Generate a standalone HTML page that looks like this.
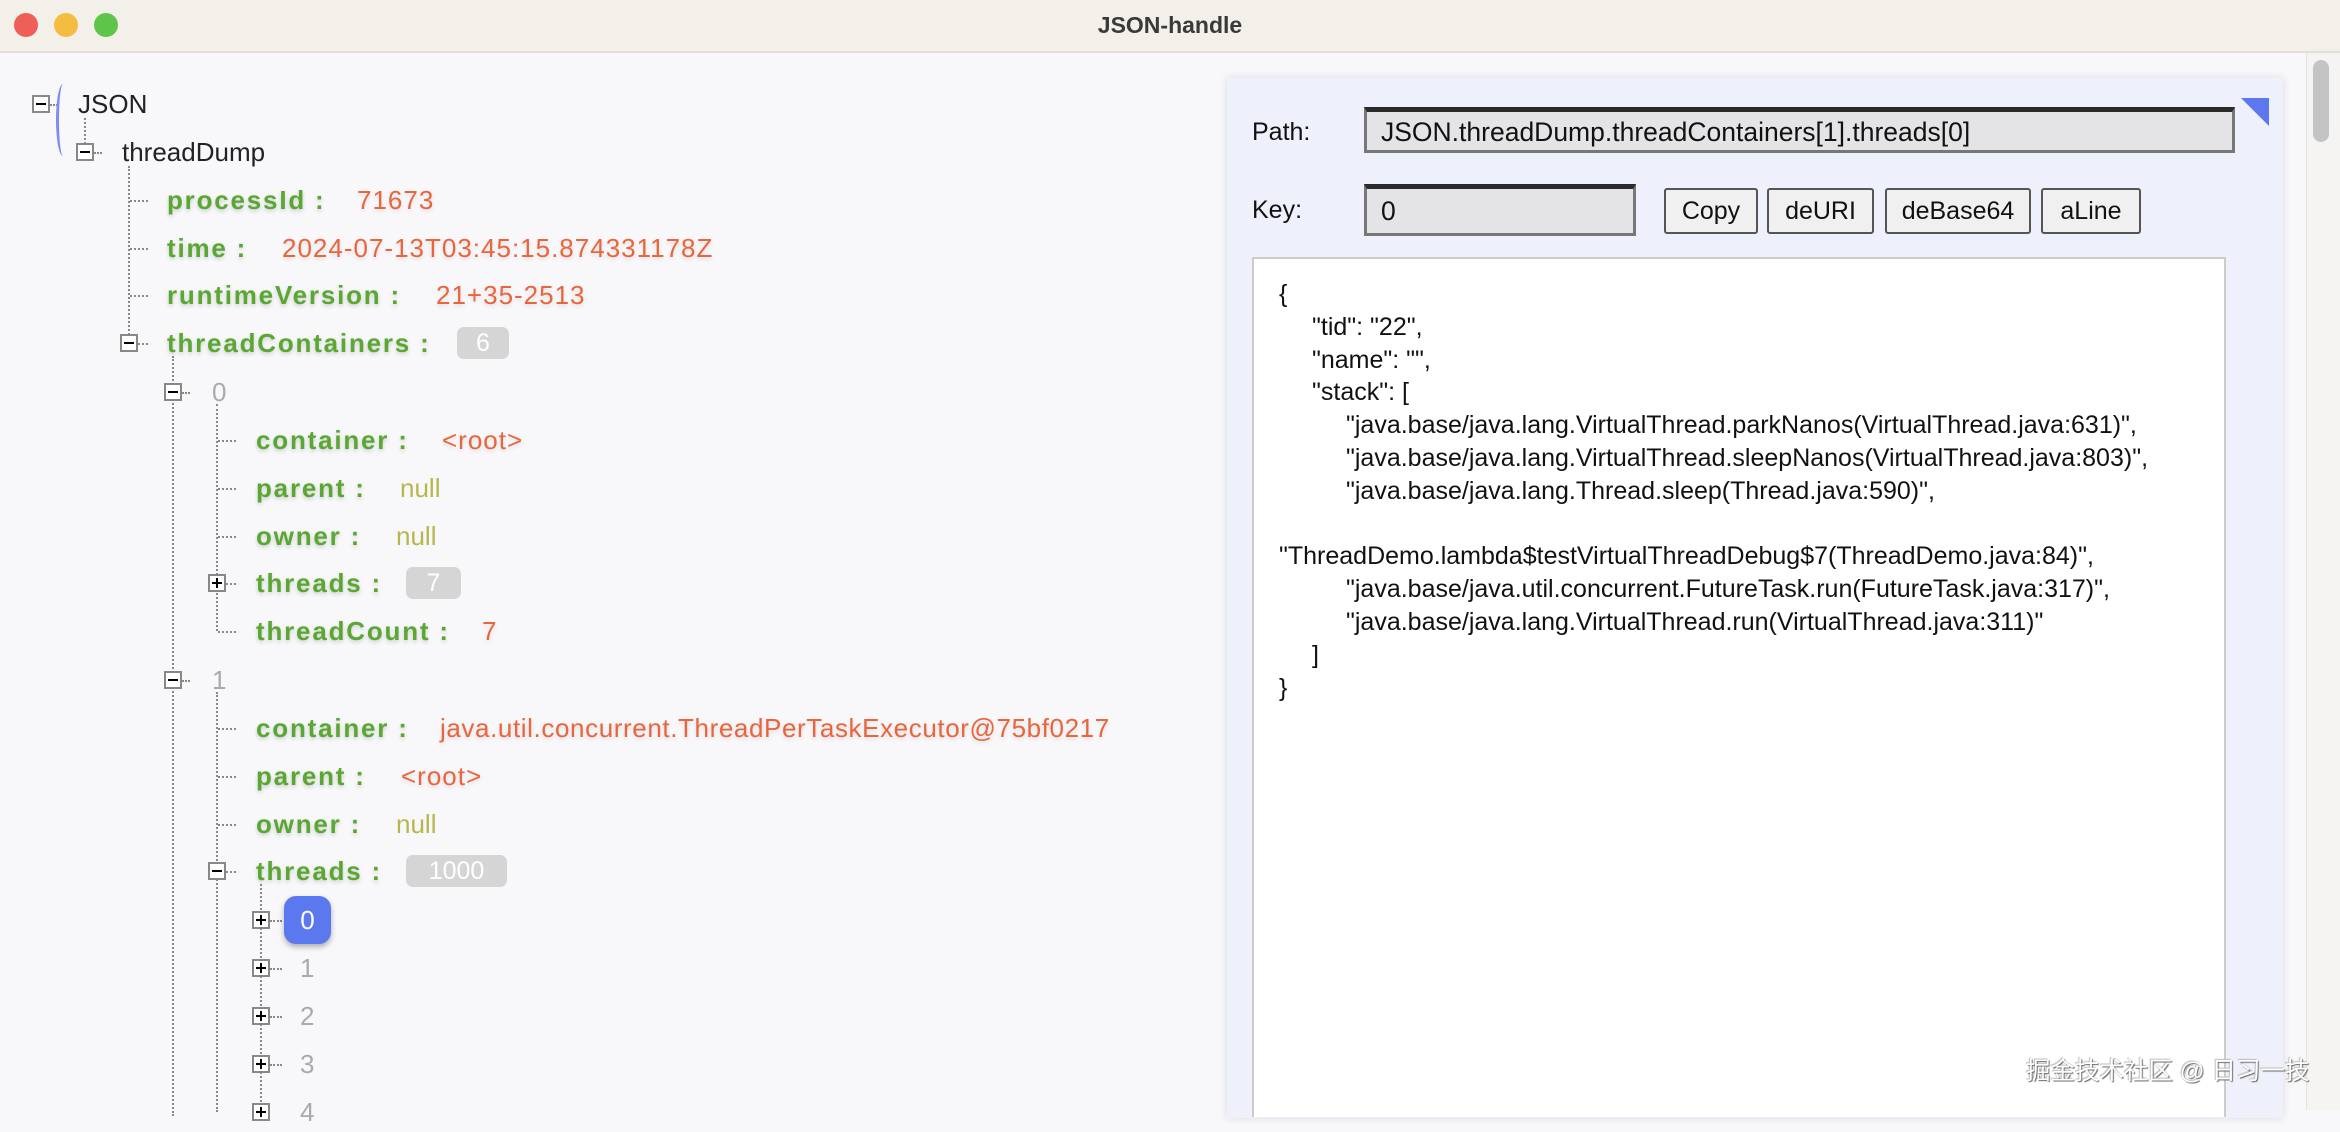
<!DOCTYPE html>
<html><head><meta charset="utf-8">
<style>
*{margin:0;padding:0;box-sizing:border-box}
body{width:2340px;height:1110px;overflow:hidden;background:#f8f8fb;font-family:"Liberation Sans",sans-serif;position:relative}
.tb{position:absolute;left:0;top:0;width:2340px;height:53px;background:#f3efe9;border-bottom:2px solid #e2dfdb}
.tb .t{position:absolute;left:0;right:0;top:0;line-height:50px;text-align:center;font-weight:bold;font-size:23px;color:#3a3a3a}
.dot{position:absolute;top:13px;width:24px;height:24px;border-radius:50%}
.r{position:absolute;height:40px;line-height:40px;white-space:nowrap;font-size:26px}
.k{color:#5aa832;font-weight:bold;letter-spacing:1.8px;text-shadow:0 2px 4px rgba(0,0,0,.18)}
.v{color:#e9653c;letter-spacing:1px;text-shadow:0 2px 4px rgba(0,0,0,.12)}
.n{color:#b6b64c}
.g{color:#aaa}
.bx{position:absolute;width:18px;height:18px;border:2px solid #888;background:#fff}
.bx:before{content:"";position:absolute;left:2px;top:6px;width:10px;height:2px;background:#000}
.bx.p:after{content:"";position:absolute;left:6px;top:2px;width:2px;height:10px;background:#000}
.vl{position:absolute;width:0;border-left:2px dotted #888}
.hl{position:absolute;height:0;border-top:2px dotted #888}
.bd{position:absolute;height:32px;border-radius:7px;background:#d5d5d5;color:#fff;font-size:25px;line-height:32px;text-align:center}
.panel{position:absolute;left:1227px;top:78px;width:1056px;height:1040px;background:#eef1fb;box-shadow:0 0 8px rgba(0,0,0,.12)}
.lbl{position:absolute;font-size:25px;color:#111}
.inp{position:absolute;background:#e4e4e6;border:3px solid #777;border-top:5px solid #2a2a2a;font-size:26.5px;line-height:40px;padding-left:14px;color:#111}
.btn{position:absolute;top:188px;height:46px;background:#f0f0f0;border:2px solid #555;border-radius:3px;font-size:25px;line-height:42px;text-align:center;color:#111}
.ta{position:absolute;left:1252px;top:257px;width:974px;height:860px;background:#fff;border:2px solid #ccc;border-bottom:none}
.code{position:absolute;left:1279px;top:278px;font-size:25px;line-height:32.8px;color:#111;white-space:pre}
.code div{height:32.8px}
.i1{padding-left:33px}.i2{padding-left:67px}
</style></head><body>
<div class="tb"><div class="dot" style="left:14px;background:#ee5f57"></div><div class="dot" style="left:54px;background:#f5bd3f"></div><div class="dot" style="left:94px;background:#5fc54a"></div><div class="t">JSON-handle</div></div>

<div class="vl" style="left:84px;top:118px;height:34px"></div>
<div class="vl" style="left:128px;top:166px;height:177px"></div>
<div class="vl" style="left:172px;top:356px;height:760px"></div>
<div class="vl" style="left:216px;top:404px;height:227px"></div>
<div class="vl" style="left:216px;top:692px;height:420px"></div>
<div class="vl" style="left:260px;top:884px;height:230px"></div>

<div class="bx" style="left:32px;top:95px"></div><div class="hl" style="left:50px;top:104px;width:8px"></div>
<div style="position:absolute;left:56px;top:84px;width:14px;height:72px;border-left:3px solid #7d8cf0;border-radius:50% 0 0 50%"></div>
<div class="r" style="left:78px;top:84px;color:#222">JSON</div>

<div class="bx" style="left:76px;top:143px"></div><div class="hl" style="left:94px;top:152px;width:8px"></div>
<div class="r" style="left:122px;top:132px;color:#222">threadDump</div>

<div class="hl" style="left:130px;top:200px;width:18px"></div>
<div class="r" style="left:167px;top:180px"><span class="k">processId :</span></div><div class="r v" style="left:357px;top:180px">71673</div>
<div class="hl" style="left:130px;top:248px;width:18px"></div>
<div class="r" style="left:167px;top:228px"><span class="k">time :</span></div><div class="r v" style="left:282px;top:228px">2024-07-13T03:45:15.874331178Z</div>
<div class="hl" style="left:130px;top:295px;width:18px"></div>
<div class="r" style="left:167px;top:275px"><span class="k">runtimeVersion :</span></div><div class="r v" style="left:436px;top:275px">21+35-2513</div>
<div class="bx" style="left:120px;top:334px"></div><div class="hl" style="left:138px;top:343px;width:10px"></div>
<div class="r" style="left:167px;top:323px"><span class="k">threadContainers :</span></div><div class="bd" style="left:457px;top:327px;width:52px">6</div>

<div class="bx" style="left:164px;top:383px"></div><div class="hl" style="left:182px;top:392px;width:8px"></div>
<div class="r g" style="left:212px;top:372px">0</div>
<div class="hl" style="left:218px;top:440px;width:18px"></div>
<div class="r" style="left:256px;top:420px"><span class="k">container :</span></div><div class="r v" style="left:442px;top:420px">&lt;root&gt;</div>
<div class="hl" style="left:218px;top:488px;width:18px"></div>
<div class="r" style="left:256px;top:468px"><span class="k">parent :</span></div><div class="r n" style="left:400px;top:468px">null</div>
<div class="hl" style="left:218px;top:536px;width:18px"></div>
<div class="r" style="left:256px;top:516px"><span class="k">owner :</span></div><div class="r n" style="left:396px;top:516px">null</div>
<div class="bx p" style="left:208px;top:574px"></div><div class="hl" style="left:226px;top:583px;width:10px"></div>
<div class="r" style="left:256px;top:563px"><span class="k">threads :</span></div><div class="bd" style="left:406px;top:567px;width:55px">7</div>
<div class="hl" style="left:218px;top:631px;width:18px"></div>
<div class="r" style="left:256px;top:611px"><span class="k">threadCount :</span></div><div class="r v" style="left:482px;top:611px">7</div>

<div class="bx" style="left:164px;top:671px"></div><div class="hl" style="left:182px;top:680px;width:8px"></div>
<div class="r g" style="left:212px;top:660px">1</div>
<div class="hl" style="left:218px;top:728px;width:18px"></div>
<div class="r" style="left:256px;top:708px"><span class="k">container :</span></div><div class="r v" style="left:440px;top:708px;letter-spacing:0.6px">java.util.concurrent.ThreadPerTaskExecutor@75bf0217</div>
<div class="hl" style="left:218px;top:776px;width:18px"></div>
<div class="r" style="left:256px;top:756px"><span class="k">parent :</span></div><div class="r v" style="left:401px;top:756px">&lt;root&gt;</div>
<div class="hl" style="left:218px;top:824px;width:18px"></div>
<div class="r" style="left:256px;top:804px"><span class="k">owner :</span></div><div class="r n" style="left:396px;top:804px">null</div>
<div class="bx" style="left:208px;top:862px"></div><div class="hl" style="left:226px;top:871px;width:10px"></div>
<div class="r" style="left:256px;top:851px"><span class="k">threads :</span></div><div class="bd" style="left:406px;top:855px;width:101px">1000</div>

<div class="bx p" style="left:252px;top:911px"></div><div class="hl" style="left:270px;top:920px;width:12px"></div>
<div style="position:absolute;left:284px;top:896px;width:47px;height:48px;border-radius:12px;background:#5b78ef;color:#fff;font-size:26px;line-height:48px;text-align:center;box-shadow:0 3px 6px rgba(0,0,0,.3)">0</div>
<div class="bx p" style="left:252px;top:959px"></div><div class="hl" style="left:270px;top:968px;width:12px"></div><div class="r g" style="left:300px;top:948px">1</div>
<div class="bx p" style="left:252px;top:1007px"></div><div class="hl" style="left:270px;top:1016px;width:12px"></div><div class="r g" style="left:300px;top:996px">2</div>
<div class="bx p" style="left:252px;top:1055px"></div><div class="hl" style="left:270px;top:1064px;width:12px"></div><div class="r g" style="left:300px;top:1044px">3</div>
<div class="bx p" style="left:252px;top:1103px"></div><div class="r g" style="left:300px;top:1092px">4</div>

<div class="panel"></div>
<div class="lbl" style="left:1252px;top:118px">Path:</div>
<div class="inp" style="left:1364px;top:107px;width:871px;height:46px">JSON.threadDump.threadContainers[1].threads[0]</div>
<div style="position:absolute;left:2241px;top:98px;width:0;height:0;border-left:28px solid transparent;border-top:28px solid #5b78ef"></div>
<div class="lbl" style="left:1252px;top:196px">Key:</div>
<div class="inp" style="left:1364px;top:184px;width:272px;height:52px;line-height:44px">0</div>
<div class="btn" style="left:1664px;width:94px">Copy</div>
<div class="btn" style="left:1767px;width:107px">deURI</div>
<div class="btn" style="left:1885px;width:146px">deBase64</div>
<div class="btn" style="left:2041px;width:100px">aLine</div>
<div class="ta"></div>
<div class="code"><div>{</div><div class="i1">"tid": "22",</div><div class="i1">"name": "",</div><div class="i1">"stack": [</div><div class="i2">"java.base/java.lang.VirtualThread.parkNanos(VirtualThread.java:631)",</div><div class="i2">"java.base/java.lang.VirtualThread.sleepNanos(VirtualThread.java:803)",</div><div class="i2">"java.base/java.lang.Thread.sleep(Thread.java:590)",</div><div></div><div>"ThreadDemo.lambda$testVirtualThreadDebug$7(ThreadDemo.java:84)",</div><div class="i2">"java.base/java.util.concurrent.FutureTask.run(FutureTask.java:317)",</div><div class="i2">"java.base/java.lang.VirtualThread.run(VirtualThread.java:311)"</div><div class="i1">]</div><div>}</div></div>

<div style="position:absolute;left:2306px;top:53px;width:34px;height:1057px;background:#f6f4f2;border-left:1px solid #e4e2e0"></div>
<div style="position:absolute;left:2313px;top:60px;width:16px;height:82px;border-radius:8px;background:#c4c4c4"></div>

<div style="position:absolute;left:2026px;top:1052px;font-size:24.5px;color:#fff;font-family:'Liberation Sans','Noto Sans CJK SC',sans-serif;text-shadow:1px 1px 1px #666,-1px -1px 1px #bbb;white-space:nowrap">掘金技术社区 @ 日习一技</div>
</body></html>
